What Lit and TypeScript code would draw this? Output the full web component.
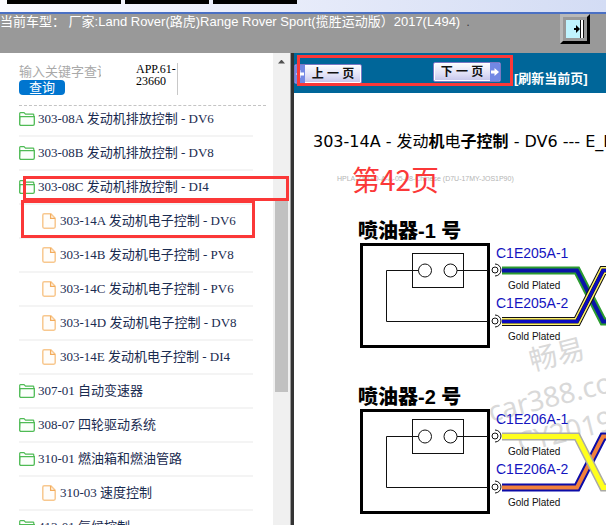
import { LitElement, html, svg, css } from "lit";
import { customElement, property } from "lit/decorators.js";

const CJK = css`"Noto Sans CJK SC", sans-serif`;

interface TreeEntry {
  label: string;
  kind: "folder" | "file";
  mark?: "wide" | "tall";
}

const ENTRIES: TreeEntry[] = [
  { label: "303-08A 发动机排放控制 - DV6", kind: "folder" },
  { label: "303-08B 发动机排放控制 - DV8", kind: "folder" },
  { label: "303-08C 发动机排放控制 - DI4", kind: "folder", mark: "wide" },
  { label: "303-14A 发动机电子控制 - DV6", kind: "file", mark: "tall" },
  { label: "303-14B 发动机电子控制 - PV8", kind: "file" },
  { label: "303-14C 发动机电子控制 - PV6", kind: "file" },
  { label: "303-14D 发动机电子控制 - DV8", kind: "file" },
  { label: "303-14E 发动机电子控制 - DI4", kind: "file" },
  { label: "307-01 自动变速器", kind: "folder" },
  { label: "308-07 四轮驱动系统", kind: "folder" },
  { label: "310-01 燃油箱和燃油管路", kind: "folder" },
  { label: "310-03 速度控制", kind: "file" },
  { label: "413-01 气候控制", kind: "folder" },
];

const folderIcon = html`<svg width="16" height="14" viewBox="0 0 16 14" aria-hidden="true">
  <path d="M1.5 12.5 Q.7 12.5 .7 11.5 V1.5 Q.7.7 1.5.7 H5 L6.5 2.2 H14 Q14.8 2.2 14.8 3 V4.7" fill="none" stroke="#4fbb55" stroke-width="1.2"/>
  <path d="M1 4.7 H15.3 V12 Q15.3 13.3 14 13.3 H2 Q.7 13.3 .7 12 Z" fill="#fbfffb" stroke="#4fbb55" stroke-width="1.3"/>
</svg>`;

const fileIcon = html`<svg width="14" height="16" viewBox="0 0 14 16" aria-hidden="true">
  <path d="M2.2.8 H8.8 L13.2 5.2 V13.8 Q13.2 15.2 11.8 15.2 H2.2 Q.8 15.2 .8 13.8 V2.2 Q.8.8 2.2.8 Z" fill="#fffdfa" stroke="#f8c88f" stroke-width="1.5"/>
  <path d="M8.6 1 V5.4 H13" fill="none" stroke="#f3ac5c" stroke-width="1.3"/>
</svg>`;

@customElement("chapter-tree")
class ChapterTree extends LitElement {
  static styles = css`
    :host { display: flex; min-width: 0; min-height: 0; background: #fff; }
    .content { flex: 1; min-width: 0; padding: 10px 7px 0 19px; }
    .search {
      display: flex; justify-content: space-between; height: 42px;
      border-bottom: 1px dashed #c4c4c4;
    }
    form { display: flex; flex-direction: column; align-items: flex-start; margin: 0; width: 82px; }
    input {
      width: 100%; height: 17px; padding: 0; border: 0; background: none; outline: 0;
      font: 13px/17px "Liberation Sans", ${CJK};
    }
    input::placeholder { color: #a9a9a9; opacity: 1; }
    .query {
      width: 46px; height: 15px; padding: 0; border: 0; border-radius: 4px;
      background: #0075cf; color: #fff; font: 13px/15px "Liberation Sans", ${CJK};
    }
    .code {
      width: 41px; height: 32px; margin-right: 88px; border-right: 1px solid #c8c8c8;
      font: 12px/12px "Liberation Serif", serif; color: #000;
    }
    ul {
      list-style: none; margin: 0; padding: 6px 13px 0 0;
      display: flex; flex-direction: column; gap: 9px;
    }
    li { position: relative; padding-bottom: 9px; border-bottom: 2px solid #f4f4f4; }
    a {
      display: flex; align-items: center; gap: 3px; height: 14px;
      font: 13px/14px "Liberation Serif", ${CJK};
      color: #1a2b50; text-decoration: none; white-space: nowrap;
    }
    a svg { flex: none; }
    .file a { padding-left: 23px; gap: 4px; }
    .mark { position: absolute; border: 3px solid #fb3838; box-sizing: border-box; pointer-events: none; z-index: 2; }
    .wide { left: 4px; right: -36px; top: -4px; height: 25px; }
    .tall { left: 2px; right: -2px; top: -14px; height: 38px; }
    .bar {
      width: 17px; flex: none; background: #f0f0f0; display: grid;
      grid-template-rows: 17px 131fr 191fr 133fr; justify-items: center;
    }
    .up { align-self: center; width: 7px; height: 4px; background: #505050; clip-path: polygon(50% 0, 100% 100%, 0 100%); }
    .thumb { grid-row: 3; width: 13px; background: #c1c1c1; }
  `;
  render() {
    return html`
      <div class="content">
        <div class="search">
          <form @submit=${(e: Event) => e.preventDefault()}>
            <input type="text" aria-label="关键字" placeholder="输入关键字查询" />
            <button class="query">查询</button>
          </form>
          <div class="code">APP.61-23660</div>
        </div>
        <ul>
          ${ENTRIES.map((e) => html`<li class=${e.kind}>
            <a href="#">${e.kind === "folder" ? folderIcon : fileIcon}<span>${e.label}</span></a>
            ${e.mark ? html`<div class="mark ${e.mark}"></div>` : null}
          </li>`)}
        </ul>
      </div>
      <div class="bar"><div class="up"></div><div class="thumb"></div></div>
    `;
  }
}

interface Layer { color: string; width: number; }
interface Injector { name: string; code: string; y: number; down: Layer[]; up: Layer[]; }

const INJECTORS: Injector[] = [
  {
    name: "喷油器-1 号", code: "C1E205A", y: 91,
    down: [{ color: "#2c9c30", width: 8 }, { color: "#0a14a8", width: 4 }],
    up: [
      { color: "#111", width: 9 }, { color: "#fff26a", width: 7 },
      { color: "#111133", width: 4 }, { color: "#0a0ac0", width: 3 },
    ],
  },
  {
    name: "喷油器-2 号", code: "C1E206A", y: 257,
    down: [{ color: "#aaaaa4", width: 8 }, { color: "#ffff1e", width: 5 }],
    up: [{ color: "#0b0ba8", width: 8 }, { color: "#f0803c", width: 4 }],
  },
];

@customElement("wiring-diagram")
class WiringDiagram extends LitElement {
  static styles = css`
    :host { display: block; overflow: hidden; min-height: 0; }
    .sheet { display: block; width: 100%; height: 420px; }
    text { white-space: pre; font-family: "Liberation Sans", ${CJK}; }
    .name { font-size: 20px; font-weight: 900; }
    .code { font-size: 14px; fill: #1414c0; }
    .plated { font-size: 10px; fill: #111; }
    .serial { font-size: 7px; fill: #b4b4b4; }
    .page { font-size: 28px; fill: #fb3838; font-family: ${CJK}; }
    .stamp { font-size: 28px; fill: #d9d9d9; font-family: "Noto Sans", ${CJK}; }
    .line { fill: none; stroke: #111; stroke-width: 1; }
    .body { fill: none; stroke: #000; stroke-width: 3; }
    .wire { fill: none; stroke-linejoin: miter; }
  `;
  private wire(layers: Layer[], d: string) {
    return layers.map((l) => svg`<path class="wire" d=${d} stroke=${l.color} stroke-width=${l.width} />`);
  }
  private pin(y: number) {
    return svg`<g transform="translate(135,${y})" class="line">
      <circle r="3" /><path d="M0 -6 A6 6 0 0 1 0 6" />
    </g>`;
  }
  private injector(i: Injector) {
    // The falling conductor of the first pair runs beneath the rising one; the second pair is reversed.
    const falling = this.wire(i.down, "M142 27.5 H217 L243 78.5 H800");
    const rising = this.wire(i.up, "M142 78.5 H217 L243 27.5 H800");
    return svg`<g transform="translate(66,${i.y})">
      <text class="name" x="-2" y="-5">${i.name}</text>
      <rect class="body" x="1.5" y="1.5" width="127" height="102" />
      <rect class="line" x="52.5" y="10.5" width="51" height="34" />
      <path class="line" d="M58.5 27.5 H26.5 V78.5 H128 M97 27.5 H128" />
      <circle class="line" cx="65" cy="27.5" r="6.5" />
      <circle class="line" cx="90.5" cy="27.5" r="6.5" />
      ${i.code === "C1E205A" ? [falling, rising] : [rising, falling]}
      ${this.pin(27)}${this.pin(78)}
      <text class="code" x="136" y="15">${i.code}-1</text>
      <text class="plated" x="148" y="46">Gold Plated</text>
      <text class="code" x="136" y="65">${i.code}-2</text>
      <text class="plated" x="148" y="97">Gold Plated</text>
    </g>`;
  }
  render() {
    return html`<svg class="sheet">
      <text class="stamp" transform="translate(238,219) rotate(-14)">畅易</text>
      <text class="stamp" transform="translate(197,270) rotate(-14)">car388.com</text>
      <text class="stamp" transform="translate(226,301) rotate(-14)">CY2019</text>
      <text class="serial" x="43" y="29">HPLA-ZMGO-A-A-05-08-Chinese (D7U-17MY-JOS1P90)</text>
      ${INJECTORS.map((i) => this.injector(i))}
      <text class="page" x="58" y="39">第42页</text>
    </svg>`;
  }
}

@customElement("page-button")
class PageButton extends LitElement {
  @property() dir = "prev";
  static styles = css`
    :host { display: block; }
    button {
      display: flex; align-items: stretch; width: 68px; height: 20px; padding: 0;
      border: 1px solid #7b78c4; border-radius: 2px; overflow: hidden;
      background: linear-gradient(#fdfdff, #dfdff6 60%, #c4c4ea);
      box-shadow: inset 0 0 0 1px #fff; color: #111;
      font: bold 12px/18px "Liberation Sans", ${CJK};
    }
    .prev { flex-direction: row-reverse; }
    .label { flex: 1; white-space: pre; text-align: center; }
    svg { flex: none; align-self: stretch; background: #7288e4; height: 18px; }
    .prev svg { transform: scaleX(-1); }
  `;
  render() {
    return html`<button class=${this.dir}>
      <span class="label"><slot></slot></span>
      <svg width="10" height="18" viewBox="0 0 10 18" aria-hidden="true">
        <path d="M1 7.5 H4.5 V5 L9 9 L4.5 13 V10.5 H1 Z" fill="#fff" />
      </svg>
    </button>`;
  }
}

@customElement("app-root")
class AppRoot extends LitElement {
  static styles = css`
    :host {
      display: grid; grid-template-rows: auto auto minmax(0, 1fr);
      height: 100vh; overflow: hidden; background: #fff;
    }
    .strip {
      display: flex; gap: 4px; height: 12px; padding-left: 7px;
      background: linear-gradient(90deg, #fafaff, #d3dcf4);
      border-bottom: 2px solid #4a70c4;
    }
    .tab { width: 114px; height: 4px; background: #000; }
    .tab + .tab { width: 84px; }
    header {
      display: flex; justify-content: space-between; align-items: flex-start;
      height: 39px; background: #999; color: #fff; overflow: hidden;
      font: 13px/15px "Liberation Sans", ${CJK}; white-space: pre;
    }
    .dot { color: #444; padding-left: 6px; }
    .door {
      margin-right: 16px; width: 30px; height: 30px; padding: 0; flex: none;
      display: grid; place-items: center; background: #999;
      border: 3px solid; border-color: #b8b8b8 #000 #000 #b8b8b8;
    }
    main { display: grid; grid-template-columns: 294px minmax(0, 1fr); grid-template-rows: minmax(0, 1fr); }
    chapter-tree { border-right: 3px solid #333; box-shadow: inset -1px 0 #999; padding-right: 1px; }
    .pane { min-width: 0; display: flex; flex-direction: column; }
    .toolbar {
      position: relative; flex: none; display: flex; align-items: flex-start;
      height: 40px; background: #069; overflow: hidden; white-space: nowrap;
    }
    .previous { margin-top: 11px; }
    .next { margin: 9px 0 0 71px; }
    .refresh {
      margin: 17px 0 0 13px; color: #fff; text-decoration: none;
      font: bold 13px/17px "Liberation Sans", ${CJK};
    }
    .frame {
      position: absolute; left: 3px; top: 2px; width: 216px; height: 31px;
      box-sizing: border-box; border: 3px solid #fb3838; pointer-events: none;
    }
    h1 {
      margin: 39px 0 0 19px; overflow: hidden; white-space: nowrap; flex: none;
      font: 16px/20px "DejaVu Sans", ${CJK}; color: #000;
    }
    .heavy { font-weight: bold; }
  `;
  render() {
    return html`
      <div class="strip"><div class="tab"></div><div class="tab"></div><div class="tab"></div></div>
      <header>
        <div>当前车型： 厂家:Land Rover(路虎)Range Rover Sport(揽胜运动版）2017(L494)<span class="dot">.</span></div>
        <button class="door" aria-label="退出">
          <svg width="18" height="18" viewBox="0 0 18 18">
            <rect width="18" height="18" fill="#c0f4ff" />
            <path d="M15 0 H17 V18 H15 Z" fill="#fff" />
            <path d="M14.5 0 V18 M17.5 0 V18" stroke="#111" />
            <path d="M8 8 H10 V5 L14 9 L10 13 V10 H8 Z" fill="#000" />
          </svg>
        </button>
      </header>
      <main>
        <chapter-tree></chapter-tree>
        <section class="pane">
          <nav class="toolbar">
            <page-button class="previous" dir="prev">上 一 页</page-button>
            <page-button class="next" dir="next">下 一 页</page-button>
            <a class="refresh" href="#">[刷新当前页]</a>
            <div class="frame"></div>
          </nav>
          <h1>303-14A - 发动<span class="heavy">机</span>电<span class="heavy">子控制</span> - DV6 --- E_DV6</h1>
          <wiring-diagram></wiring-diagram>
        </section>
      </main>
    `;
  }
}
